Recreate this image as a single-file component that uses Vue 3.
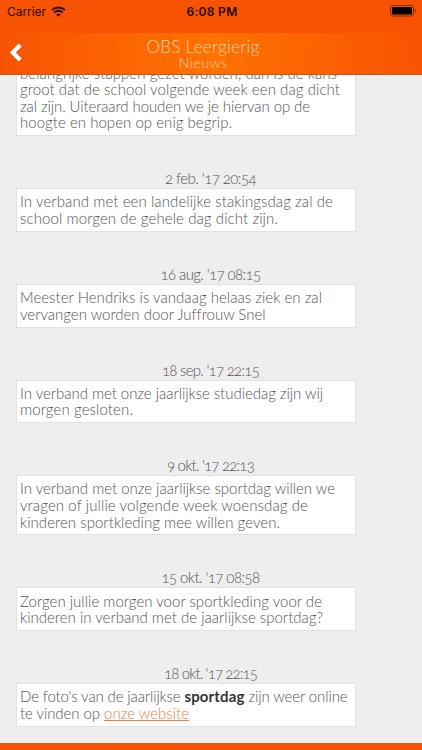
<script setup>
// vFit spreads the letters of a line over the given width
const vFit = (el, { value }) => {
  el.style.letterSpacing = '0px'
  const count = el.textContent.length
  const natural = el.getBoundingClientRect().width
  el.style.letterSpacing = `${(value - natural) / count}px`
}

const news = [
  {
    date: '',
    lines: [
      { text: 'belangrijke stappen gezet worden, dan is de kans', width: 317 },
      { text: 'groot dat de school volgende week een dag dicht', width: 320 },
      { text: 'zal zijn. Uiteraard houden we je hiervan op de', width: 290 },
      { text: 'hoogte en hopen op enig begrip.', width: 212 },
    ],
  },
  {
    date: '2 feb. \'17 20:54',
    dateWidth: 91,
    lines: [
      { text: 'In verband met een landelijke stakingsdag zal de', width: 313 },
      { text: 'school morgen de gehele dag dicht zijn.', width: 258 },
    ],
  },
  {
    date: '16 aug. \'17 08:15',
    dateWidth: 100,
    lines: [
      { text: 'Meester Hendriks is vandaag helaas ziek en zal', width: 302 },
      { text: 'vervangen worden door Juffrouw Snel', width: 245 },
    ],
  },
  {
    date: '18 sep. \'17 22:15',
    dateWidth: 97,
    lines: [
      { text: 'In verband met onze jaarlijkse studiedag zijn wij', width: 303 },
      { text: 'morgen gesloten.', width: 113 },
    ],
  },
  {
    date: '9 okt. \'17 22:13',
    dateWidth: 87,
    lines: [
      { text: 'In verband met onze jaarlijkse sportdag willen we', width: 315 },
      { text: 'vragen of jullie volgende week woensdag de', width: 288 },
      { text: 'kinderen sportkleding mee willen geven.', width: 260 },
    ],
  },
  {
    date: '15 okt. \'17 08:58',
    dateWidth: 98,
    lines: [
      { text: 'Zorgen jullie morgen voor sportkleding voor de', width: 302 },
      { text: 'kinderen in verband met de jaarlijkse sportdag?', width: 303 },
    ],
  },
  {
    date: '18 okt. \'17 22:15',
    dateWidth: 93,
    lines: [
      { text: 'De foto\'s van de jaarlijkse ', width: 164.5, bold: 'sportdag', boldWidth: 60, after: ' zijn weer online', afterWidth: 103 },
      { text: 'te vinden op ', width: 84, link: 'onze website', linkWidth: 85 },
    ],
  },
]
</script>

<template>
  <div class="screen">
    <header class="header">
      <div class="status-bar">
        <div class="carrier">
          <span v-fit="39">Carrier</span>
          <svg class="wifi" width="15" height="11" viewBox="0 0 15 11">
            <path d="M1 4.1a9.4 9.4 0 0 1 13 0" />
            <path d="M3.3 6.5a6.1 6.1 0 0 1 8.4 0" />
            <path class="wifi-dot" d="M7.5 10.8 5.2 8.5a3.3 3.3 0 0 1 4.6 0z" />
          </svg>
        </div>
        <span v-fit="51" class="time">6:08 PM</span>
        <svg class="battery" width="27" height="12" viewBox="0 0 27 12">
          <rect class="battery-frame" x=".5" y=".5" width="23" height="10.5" rx="2.2" />
          <rect x="2" y="2" width="20" height="7.5" rx=".8" />
          <path class="battery-cap" d="M24.7 4q1.5.5 1.5 1.8t-1.5 1.8z" />
        </svg>
      </div>
      <div class="nav-bar">
        <svg class="back" width="14" height="20" viewBox="0 0 14 20">
          <path d="M11.2 2 3.8 9.5l7.4 7.5" />
        </svg>
        <div class="titles">
          <h1><span v-fit="113">OBS Leergierig</span></h1>
          <h2><span v-fit="49">Nieuws</span></h2>
        </div>
      </div>
    </header>

    <main class="feed">
      <article v-for="(item, i) in news" :key="i" class="item">
        <time class="date"><span v-if="item.date" v-fit="item.dateWidth">{{ item.date }}</span></time>
        <div class="message">
          <div v-for="line in item.lines" :key="line.text" class="line">
            <span v-fit="line.width">{{ line.text }}</span>
            <b v-if="line.bold" v-fit="line.boldWidth">{{ line.bold }}</b>
            <span v-if="line.after" v-fit="line.afterWidth">{{ line.after }}</span>
            <a v-if="line.link" v-fit="line.linkWidth">{{ line.link }}</a>
          </div>
        </div>
      </article>
    </main>
    <footer class="footer"></footer>
  </div>
</template>

<style>
body {
  margin: 0;
}
</style>

<style scoped>
.screen {
  display: flex;
  flex-direction: column;
  width: 422px;
  height: 750px;
  overflow: hidden;
  background: #eee;
  font-family: Lato, "Open Sans", sans-serif;
  font-weight: 300;
  color: #555;
}

.header {
  flex: none;
  height: 75px;
  box-sizing: border-box;
  background: #f75303;
  border-bottom: 1px solid #c9581f;
}

.status-bar {
  display: grid;
  grid-template-columns: 1fr auto 1fr;
  align-items: center;
  height: 22px;
  padding: 0 5px 0 7px;
  font-family: Inter, sans-serif;
  font-size: 12px;
  font-weight: 400;
  color: #250b00;
}

.carrier {
  display: flex;
  align-items: center;
  gap: 5px;
}

.time {
  font-weight: 600;
}

.wifi {
  fill: none;
  stroke: #250b00;
  stroke-width: 2;
}

.wifi-dot {
  fill: #250b00;
  stroke: none;
}

.battery {
  justify-self: end;
  fill: #000;
}

.battery-frame {
  fill: none;
  stroke: #7c2b05;
}

.battery-cap {
  fill: #7c2b05;
}

.nav-bar {
  display: grid;
  grid-template-columns: 40px 1fr 56px;
  align-items: center;
  height: 41px;
  margin-top: 11px;
  background: linear-gradient(90deg, #f75303 0%, #ff7200 50%, #f75303 100%);
}

.back {
  margin-left: 9px;
  margin-top: -2px;
  fill: none;
  stroke: #fff;
  stroke-width: 4.2;
}

.titles {
  text-align: center;
  color: #ffd3ae;
}

h1,
h2 {
  margin: 0;
  font-weight: 300;
}

h1 {
  font-size: 17px;
  line-height: 18px;
}

h2 {
  font-size: 14.5px;
  line-height: 13px;
}

.feed {
  flex: 1;
  min-height: 0;
  overflow: hidden;
}

.item {
  width: 340px;
  margin-left: 16px;
}

.item:first-child {
  margin-top: -35.7px;
}

.date {
  display: block;
  height: 20px;
  padding-left: 49px;
  font-size: 15px;
  font-feature-settings: "onum";
  line-height: 20px;
  text-align: center;
}

.message {
  box-sizing: border-box;
  padding: 4.2px 3px 4.3px;
  margin-bottom: 32px;
  background: #fff;
  border: 1px solid #e2e2e2;
}

.line {
  display: flex;
  height: 16.6px;
  font-size: 15px;
  line-height: 16.6px;
  white-space: pre;
}

b {
  font-weight: 700;
  color: #333;
}

a {
  color: #f07a42;
  text-decoration: underline;
}

.footer {
  flex: none;
  height: 7px;
  background: #f75303;
}
</style>
